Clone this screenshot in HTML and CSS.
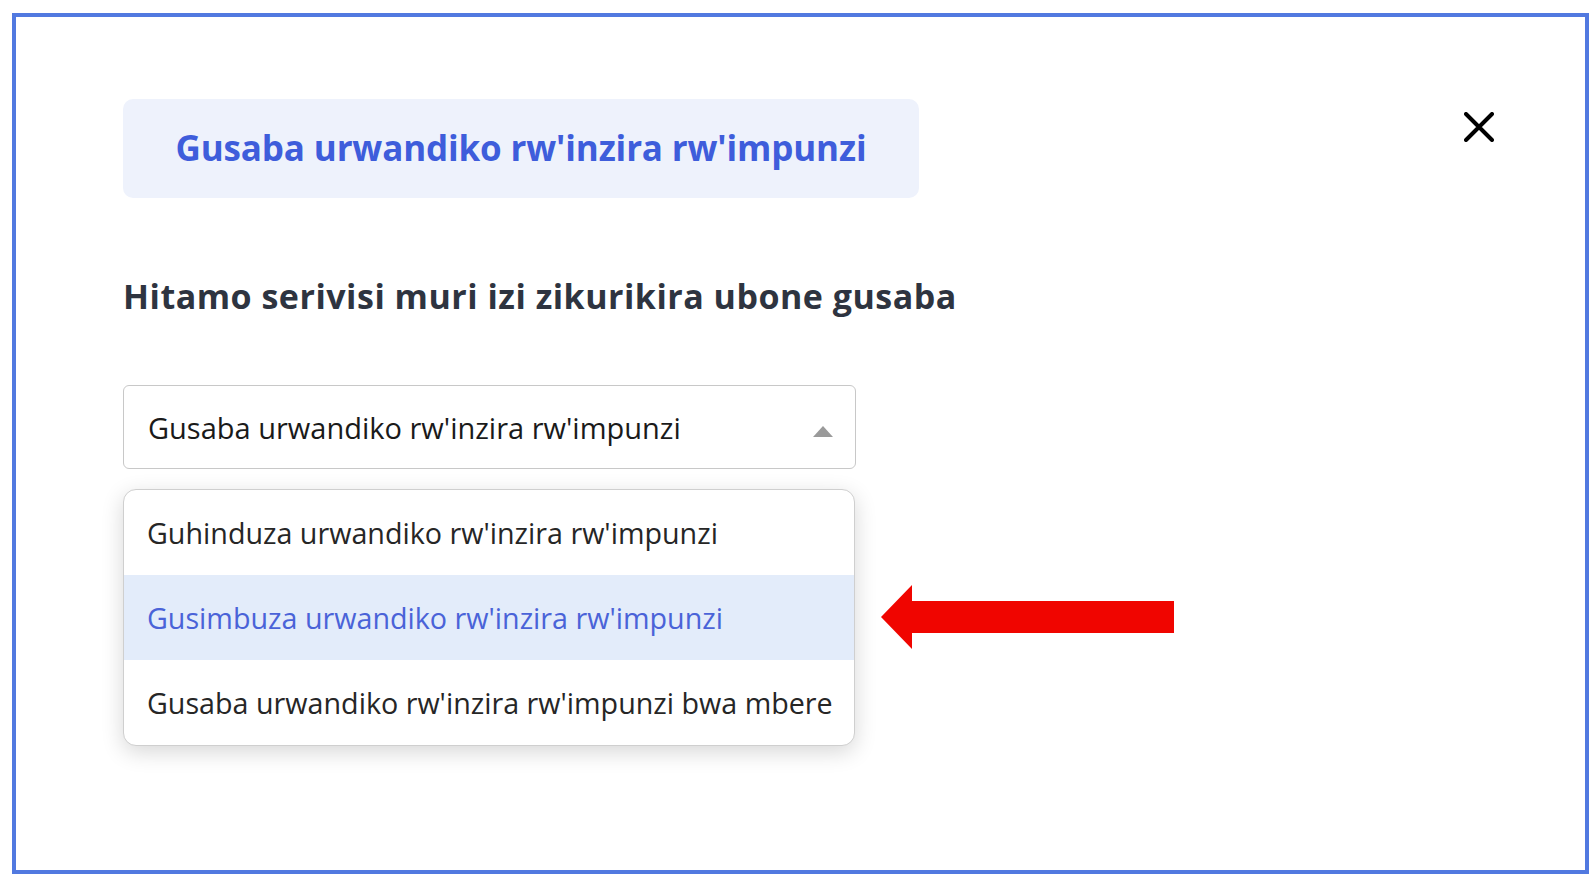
FILE: index.html
```html
<!DOCTYPE html>
<html lang="rw">
<head>
<meta charset="utf-8">
<title>Gusaba urwandiko rw'inzira rw'impunzi</title>
<link rel="stylesheet" href="styles.css">
</head>
<body>
<div class="frame">
  <div class="modal">
    <div class="modal-header">
      <div class="title-box">Gusaba urwandiko rw'inzira rw'impunzi</div>
      <button class="close-btn" aria-label="Close">
        <svg width="30" height="30" viewBox="0 0 30 30"><path d="M2 2 L28 28 M28 2 L2 28" stroke="#000" stroke-width="4" stroke-linecap="round"/></svg>
      </button>
    </div>
    <h2 class="heading">Hitamo serivisi muri izi zikurikira ubone gusaba</h2>
    <div class="select">
      <span class="select-value">Gusaba urwandiko rw'inzira rw'impunzi</span>
      <span class="caret"></span>
    </div>
    <div class="dropdown-wrap">
      <ul class="dropdown">
        <li class="option">Guhinduza urwandiko rw'inzira rw'impunzi</li>
        <li class="option option-active">Gusimbuza urwandiko rw'inzira rw'impunzi</li>
        <li class="option">Gusaba urwandiko rw'inzira rw'impunzi bwa mbere</li>
      </ul>
      <svg class="pointer-arrow" width="294" height="66" viewBox="0 0 294 66"><polygon points="0,32 31,0 31,16 293,16 293,48 31,48 31,64" fill="#f00500"/></svg>
    </div>
  </div>
</div>
</body>
</html>
```

FILE: styles.css
```css
html, body {
  margin: 0;
  padding: 0;
  background: #ffffff;
}

body {
  font-family: "Open Sans", "Noto Sans", sans-serif;
  padding: 13px 7px 8px 12px;
  height: 882px;
  box-sizing: border-box;
}

.frame {
  box-sizing: border-box;
  height: 861px;
  border: 4px solid #5179e0;
  background: #ffffff;
}

.modal {
  padding: 82px 91px 0 107px;
}

.modal-header {
  display: flex;
  justify-content: space-between;
  align-items: flex-start;
}

.title-box {
  width: 796px;
  height: 99px;
  box-sizing: border-box;
  background: #eef2fc;
  border-radius: 10px;
  display: flex;
  align-items: center;
  justify-content: center;
  color: #3e5ddb;
  font-family: "Open Sans", sans-serif;
  font-weight: 700;
  font-size: 35px;
  letter-spacing: -0.15px;
  padding-bottom: 2px;
}

.close-btn {
  margin-top: 13px;
  padding: 0;
  border: none;
  background: none;
  width: 30px;
  height: 30px;
  display: block;
}

.heading {
  margin: 78px 0 0 0;
  font-family: "Open Sans", sans-serif;
  font-weight: 700;
  font-size: 34px;
  line-height: 40px;
  letter-spacing: 0.5px;
  color: #2e3440;
}

.select {
  margin-top: 69px;
  width: 733px;
  height: 84px;
  box-sizing: border-box;
  border: 1.5px solid #c8c8c8;
  border-radius: 6px;
  display: flex;
  align-items: center;
  justify-content: space-between;
  padding: 0 22px 0 24px;
  font-size: 29px;
  color: #1a1a1a;
}

.caret {
  width: 0;
  height: 0;
  border-left: 10px solid transparent;
  border-right: 10px solid transparent;
  border-bottom: 11px solid #9a9a9a;
  margin-top: 8px;
}

.dropdown-wrap {
  margin-top: 20px;
  display: flex;
  align-items: flex-start;
  position: relative;
}

.dropdown {
  list-style: none;
  margin: 0;
  padding: 0;
  width: 732px;
  box-sizing: border-box;
  border: 1.5px solid #cfcfcf;
  border-radius: 13px;
  overflow: hidden;
  background: #fff;
  box-shadow: 0 6px 22px rgba(0, 0, 0, 0.16);
}

.option {
  height: 85px;
  display: flex;
  align-items: center;
  padding-left: 23px;
  font-size: 28.7px;
  color: #262626;
}

.option-active {
  background: #e3ecfa;
  color: #4a63d8;
}

.pointer-arrow {
  position: absolute;
  left: 758px;
  top: 96px;
}
```
